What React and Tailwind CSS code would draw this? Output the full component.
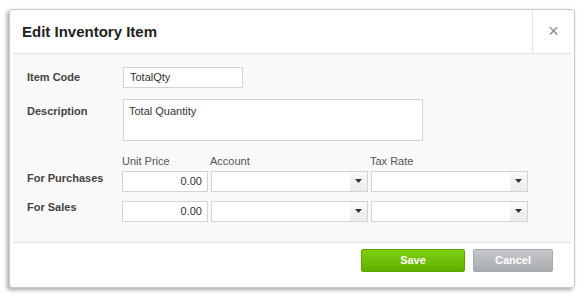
export default function App() {
    const font = { fontFamily: '"Liberation Sans", Arial, sans-serif' };

    const Select = ({ w }) => (
        <div className={`flex h-[21px] ${w} border border-[#d4d4d4] bg-white`}>
            <div className="flex-1" />
            <div className="flex w-[17px] items-center justify-center bg-gradient-to-b from-[#fafafa] to-[#ebebeb]">
                <svg width="7" height="4" viewBox="0 0 7 4">
                    <path d="M0 0h7L3.5 4z" fill="#333" />
                </svg>
            </div>
        </div>
    );

    return (
        <div className="h-[296px] w-[584px] bg-white pl-[9px] pr-[9px] pt-[9px]" style={font}>
            {/* Dialog */}
            <div className="flex h-[279px] flex-col rounded-[3px] border border-[#c9c9c9] bg-white shadow-[-2px_2px_4px_rgba(0,0,0,0.35)]">
                {/* Header */}
                <div className="flex h-[43px] items-stretch">
                    <div className="flex flex-1 items-center pl-[12px] pt-[2px] text-[15px] font-bold text-[#222]">
                        Edit Inventory Item
                    </div>
                    <div className="flex w-[42px] items-center justify-center border-l border-[#e4e4e4] text-[18px] text-[#888]">
                        ×
                    </div>
                </div>

                {/* Body */}
                <div className="mx-[3px] flex h-[190px] flex-col border-y border-[#e3e3e3] bg-[#f9f9f9] px-[14px] text-[11px] text-[#333]">
                    <div className="mt-[13px] flex items-center">
                        <div className="w-[96px] font-bold text-[#444]">Item Code</div>
                        <div className="flex h-[21px] w-[120px] items-center border border-[#d4d4d4] bg-white px-[6px] text-[#333]">
                            TotalQty
                        </div>
                    </div>
                    <div className="mt-[11px] flex items-start">
                        <div className="w-[96px] pt-[4px] font-bold text-[#444]">Description</div>
                        <div className="h-[42px] w-[300px] border border-[#d4d4d4] bg-white px-[5px] pt-[3px] text-[#333]">
                            Total Quantity
                        </div>
                    </div>
                    <div className="mt-[12px] flex text-[#555]">
                        <div className="w-[95px]" />
                        <div className="w-[88px]">Unit Price</div>
                        <div className="w-[160px]">Account</div>
                        <div>Tax Rate</div>
                    </div>
                    <div className="mt-[1px] flex items-start gap-[3px]">
                        <div className="-mt-[1px] w-[92px] font-bold text-[#444]">For Purchases</div>
                        <div className="flex h-[21px] w-[86px] items-center justify-end border border-[#d4d4d4] bg-white pr-[5px]">0.00</div>
                        <Select w="w-[157px]" />
                        <Select w="w-[157px]" />
                    </div>
                    <div className="mt-[9px] flex items-start gap-[3px]">
                        <div className="-mt-[2px] w-[92px] font-bold text-[#444]">For Sales</div>
                        <div className="flex h-[21px] w-[86px] items-center justify-end border border-[#d4d4d4] bg-white pr-[5px]">0.00</div>
                        <Select w="w-[157px]" />
                        <Select w="w-[157px]" />
                    </div>
                </div>

                {/* Footer */}
                <div className="flex flex-1 items-start justify-end gap-[8px] pr-[21px] pt-[6px]">
                    <button className="flex h-[23px] w-[104px] items-center justify-center rounded-[2px] border border-[#5aa400] bg-gradient-to-b from-[#7fd012] to-[#5fb100] text-[11px] font-bold text-white">
                        Save
                    </button>
                    <button className="flex h-[23px] w-[80px] items-center justify-center rounded-[2px] border border-[#a4a7ab] bg-gradient-to-b from-[#c6c8cb] to-[#a9acb0] text-[11px] font-bold text-white">
                        Cancel
                    </button>
                </div>
            </div>
        </div>
    );
}
